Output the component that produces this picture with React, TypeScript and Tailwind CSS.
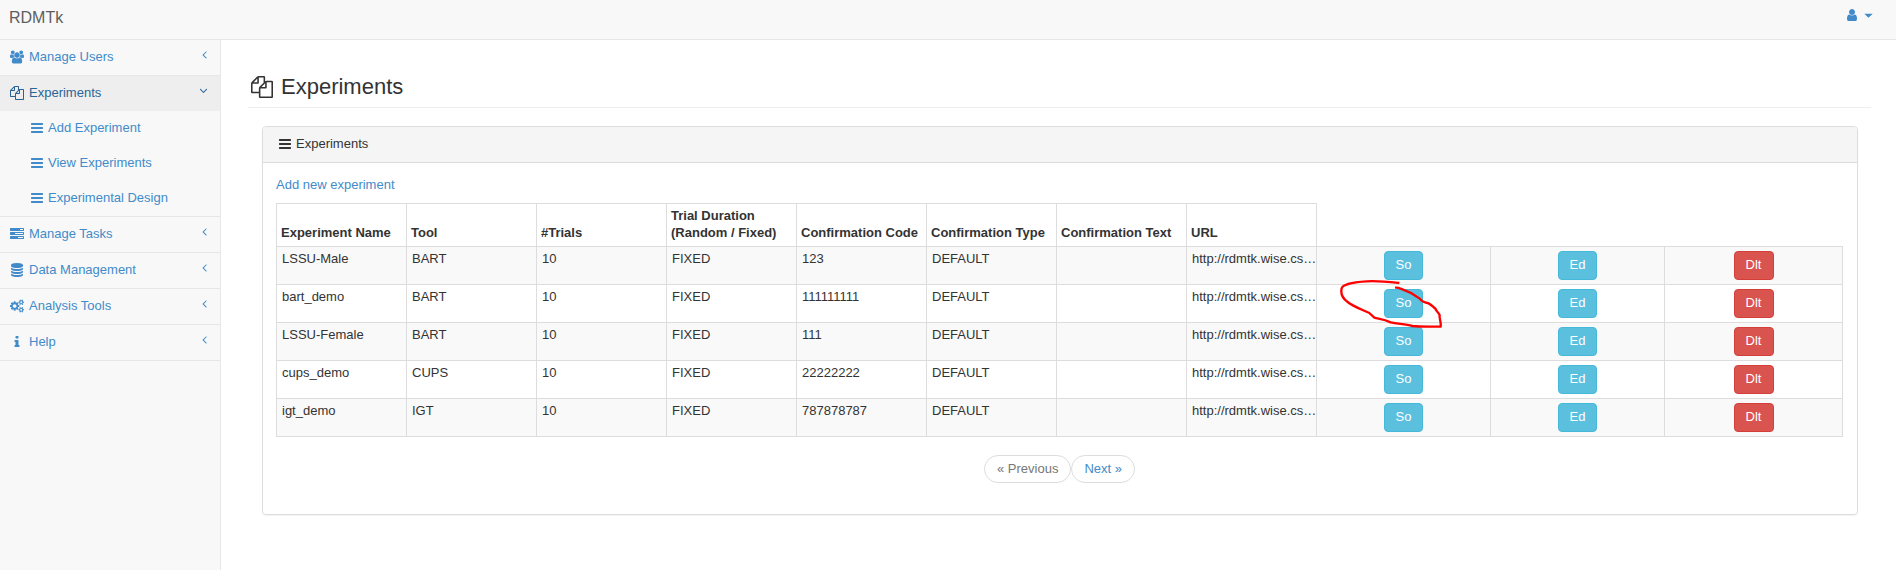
import React from "react";

const icons = {
  files:
    "M1696 384q40 0 68 28t28 68v1216q0 40-28 68t-68 28h-960q-40 0-68-28t-28-68v-288h-544q-40 0-68-28t-28-68v-672q0-40 20-88t48-76l408-408q28-28 76-48t88-20h416q40 0 68 28t28 68v328q68-40 128-40h416zm-544 213l-299 299h299v-299zm-640-384l-299 299h299v-299zm196 647l316-316v-416h-384v416q0 40-28 68t-68 28h-416v640h512v-256q0-40 20-88t48-76zm956 804v-1152h-384v416q0 40-28 68t-68 28h-416v640h896z",
  bars: "M1664 1344v128q0 26-19 45t-45 19h-1408q-26 0-45-19t-19-45v-128q0-26 19-45t45-19h1408q26 0 45 19t19 45zm0-512v128q0 26-19 45t-45 19h-1408q-26 0-45-19t-19-45v-128q0-26 19-45t45-19h1408q26 0 45 19t19 45zm0-512v128q0 26-19 45t-45 19h-1408q-26 0-45-19t-19-45v-128q0-26 19-45t45-19h1408q26 0 45 19t19 45z",
  users:
    "M529 896q-162 5-265 128h-134q-82 0-138-40.5t-56-118.5q0-353 124-353 6 0 43.5 21t97.5 42.5 119 21.5q67 0 133-23-5 37-5 66 0 139 81 256zm1071 637q0 120-73 189.5t-194 69.5h-874q-121 0-194-69.5t-73-189.5q0-53 3.5-103.5t14-109 26.5-108.5 43-97.5 62-81 85.5-53.5 111.5-20q10 0 43 21.5t73 48 107 48 135 21.5 135-21.5 107-48 73-48 43-21.5q61 0 111.5 20t85.5 53.5 62 81 43 97.5 26.5 108.5 14 109 3.5 103.5zm-1024-1277q0 106-75 181t-181 75-181-75-75-181 75-181 181-75 181 75 75 181zm704 384q0 159-112.5 271.5t-271.5 112.5-271.5-112.5-112.5-271.5 112.5-271.5 271.5-112.5 271.5 112.5 112.5 271.5zm576 225q0 78-56 118.5t-138 40.5h-134q-103-123-265-128 81-117 81-256 0-29-5-66 66 23 133 23 59 0 119-21.5t97.5-42.5 43.5-21q124 0 124 353zm-128-609q0 106-75 181t-181 75-181-75-75-181 75-181 181-75 181 75 75 181z",
  tasks:
    "M1024 1408h640v-128h-640v128zm-384-512h1024v-128h-1024v128zm640-512h384v-128h-384v128zm512 832v256q0 26-19 45t-45 19h-1664q-26 0-45-19t-19-45v-256q0-26 19-45t45-19h1664q26 0 45 19t19 45zm0-512v256q0 26-19 45t-45 19h-1664q-26 0-45-19t-19-45v-256q0-26 19-45t45-19h1664q26 0 45 19t19 45zm0-512v256q0 26-19 45t-45 19h-1664q-26 0-45-19t-19-45v-256q0-26 19-45t45-19h1664q26 0 45 19t19 45z",
  database:
    "M896 768q237 0 443-43t325-127v170q0 69-103 128t-280 93.5-385 34.5-385-34.5-280-93.5-103-128v-170q119 84 325 127t443 43zm0 768q237 0 443-43t325-127v170q0 69-103 128t-280 93.5-385 34.5-385-34.5-280-93.5-103-128v-170q119 84 325 127t443 43zm0-384q237 0 443-43t325-127v170q0 69-103 128t-280 93.5-385 34.5-385-34.5-280-93.5-103-128v-170q119 84 325 127t443 43zm0-1152q208 0 385 34.5t280 93.5 103 128v128q0 69-103 128t-280 93.5-385 34.5-385-34.5-280-93.5-103-128v-128q0-69 103-128t280-93.5 385-34.5z",
  cogs: "M832 896q0-106-75-181t-181-75-181 75-75 181 75 181 181 75 181-75 75-181zm768 512q0-52-38-90t-90-38-90 38-38 90q0 53 37.5 90.5t90.5 37.5 90.5-37.5 37.5-90.5zm0-1024q0-52-38-90t-90-38-90 38-38 90q0 53 37.5 90.5t90.5 37.5 90.5-37.5 37.5-90.5zm-384 421v185q0 10-7 19.5t-16 10.5l-155 24q-11 35-32 76 34 48 90 115 7 11 7 20 0 12-7 19-23 30-82.5 89.5t-78.5 59.5q-11 0-21-7l-115-90q-37 19-77 31-11 108-23 155-7 24-30 24h-186q-11 0-20-7.5t-10-17.5l-23-153q-34-10-75-31l-118 89q-7 7-20 7-11 0-21-8-144-133-144-160 0-9 7-19 10-14 41-53t47-61q-23-44-35-82l-152-24q-10-1-17-9.5t-7-19.5v-185q0-10 7-19.5t16-10.5l155-24q11-35 32-76-34-48-90-115-7-11-7-20 0-12 7-20 22-30 82-89t79-59q11 0 21 7l115 90q34-18 77-32 11-108 23-154 7-24 30-24h186q11 0 20 7.5t10 17.5l23 153q34 10 75 31l118-89q8-7 20-7 11 0 21 8 144 133 144 160 0 8-7 19-12 16-42 54t-45 60q23 48 34 82l152 23q10 2 17 10.5t7 19.5zm640 533v140q0 16-149 31-12 27-30 52 51 113 51 138 0 4-4 7-122 71-124 71-8 0-46-47t-52-68q-20 2-30 2t-30-2q-14 21-52 68t-46 47q-2 0-124-71-4-3-4-7 0-25 51-138-18-25-30-52-149-15-149-31v-140q0-16 149-31 13-29 30-52-51-113-51-138 0-4 4-7 4-2 35-20t59-34 30-16q8 0 46 46.5t52 67.5q20-2 30-2t30 2q51-71 92-112l6-2q4 0 124 70 4 3 4 7 0 25-51 138 17 23 30 52 149 15 149 31zm0-1024v140q0 16-149 31-12 27-30 52 51 113 51 138 0 4-4 7-122 71-124 71-8 0-46-47t-52-68q-20 2-30 2t-30-2q-14 21-52 68t-46 47q-2 0-124-71-4-3-4-7 0-25 51-138-18-25-30-52-149-15-149-31v-140q0-16 149-31 13-29 30-52-51-113-51-138 0-4 4-7 4-2 35-20t59-34 30-16q8 0 46 46.5t52 67.5q20-2 30-2t30 2q51-71 92-112l6-2q4 0 124 70 4 3 4 7 0 25-51 138 17 23 30 52 149 15 149 31z",
  info: "M1216 1344v128q0 26-19 45t-45 19h-512q-26 0-45-19t-19-45v-128q0-26 19-45t45-19h64v-384h-64q-26 0-45-19t-19-45v-128q0-26 19-45t45-19h384q26 0 45 19t19 45v576h64q26 0 45 19t19 45zm-128-1152v192q0 26-19 45t-45 19h-256q-26 0-45-19t-19-45v-192q0-26 19-45t45-19h256q26 0 45 19t19 45z",
  user: "M1536 1399q0 109-62.5 187t-150.5 78h-854q-88 0-150.5-78t-62.5-187q0-85 8.5-160.5t31.5-152 58.5-131 94-89 134.5-34.5q131 128 313 128t313-128q76 0 134.5 34.5t94 89 58.5 131 31.5 152 8.5 160.5zm-256-887q0 159-112.5 271.5t-271.5 112.5-271.5-112.5-112.5-271.5 112.5-271.5 271.5-112.5 271.5 112.5 112.5 271.5z",
  angleLeft:
    "M1203 544q0 13-10 23l-393 393 393 393q10 10 10 23t-10 23l-50 50q-10 10-23 10t-23-10l-466-466q-10-10-10-23t10-23l466-466q10-10 23-10t23 10l50 50q10 10 10 23z",
  angleDown:
    "M1395 736q0 13-10 23l-466 466q-10 10-23 10t-23-10l-466-466q-10-10-10-23t10-23l50-50q10-10 23-10t23 10l393 393 393-393q10-10 23-10t23 10l50 50q10 10 10 23z",
  caret: "M320 640h1152l-576 576z",
};

type IconName = keyof typeof icons;

function Icon({ name, className }: { name: IconName; className: string }) {
  const wide = name === "users" || name === "cogs";
  return (
    <svg
      aria-hidden="true"
      viewBox={wide ? "-64 0 1920 1792" : "0 0 1792 1792"}
      className={className}
      fill="currentColor"
    >
      <path d={icons[name]} />
    </svg>
  );
}

function NavItem({ icon, label, open = false }: { icon: IconName; label: string; open?: boolean }) {
  return (
    <a
      href="#"
      className={
        open
          ? "flex items-start bg-[#eeeeee] pt-[7px] pr-[10px] pb-[9px] pl-[9px] text-[#2a6496]"
          : "flex items-start pt-[7px] pr-[9px] pb-[9px] pl-[9px] text-[#428bca]"
      }
    >
      <span className="flex h-[19px] w-4 items-center justify-center">
        <Icon name={icon} className="h-[14px] w-[14px]" />
      </span>
      <span className="ml-1 grow">{label}</span>
      <Icon name={open ? "angleDown" : "angleLeft"} className="mt-px h-[13px] w-[13px]" />
    </a>
  );
}

function SubItem({ label }: { label: string }) {
  return (
    <a href="#" className="flex pt-[7px] pb-[9px] pl-[29px] text-[#428bca]">
      <span className="flex h-[19px] w-4 items-center justify-center">
        <Icon name="bars" className="h-[14px] w-[14px]" />
      </span>
      <span className="ml-[3px]">{label}</span>
    </a>
  );
}

function Scribble() {
  return (
    <svg
      aria-hidden="true"
      viewBox="480 261 315 159"
      className="pointer-events-none absolute -top-3 -left-11 z-10 h-[53px] w-[105px] max-w-none"
      fill="none"
      stroke="#ff0000"
      strokeWidth="7"
      strokeLinejoin="round"
    >
      <path d="M658 279C630 276 595 272 560 274C520 276 488 284 485 295C481 312 489 326 503 336C520 350 545 358 568 369L583 383C600 387 612 387 632 397C655 402 675 402 697 408C730 411 755 409 782 410C784 395 777 385 779 375C773 365 768 362 767 357C758 350 750 340 742 339C730 338 722 330 718 325C700 312 680 302 662 296Q655 292 645 293" />
    </svg>
  );
}

const columns = [
  "Experiment Name",
  "Tool",
  "#Trials",
  "Trial Duration (Random / Fixed)",
  "Confirmation Code",
  "Confirmation Type",
  "Confirmation Text",
  "URL",
];

const url = "http://rdmtk.wise.cs…";

const rows = [
  ["LSSU-Male", "BART", "10", "FIXED", "123", "DEFAULT", "", url],
  ["bart_demo", "BART", "10", "FIXED", "111111111", "DEFAULT", "", url],
  ["LSSU-Female", "BART", "10", "FIXED", "111", "DEFAULT", "", url],
  ["cups_demo", "CUPS", "10", "FIXED", "22222222", "DEFAULT", "", url],
  ["igt_demo", "IGT", "10", "FIXED", "787878787", "DEFAULT", "", url],
];

const infoButton =
  "block h-[29px] w-[39px] rounded-[4px] border border-[#46b8da] bg-[#5bc0de] pb-[3px] text-center text-white";
const dangerButton =
  "block h-[29px] w-10 rounded-[4px] border border-[#d43f3a] bg-[#d9534f] pb-[3px] text-center text-white";

export default function App() {
  return (
    <div className="flex min-h-screen flex-col bg-white font-['Liberation_Sans',Arial,sans-serif] text-[13px] leading-[19px] text-[#333333]">
      <header className="flex items-start justify-between border-b border-[#e7e7e7] bg-[#f8f8f8] pr-[21px] pb-[10px] pl-[9px]">
        <a href="#" className="pt-[7px] text-[16px] leading-[22px] text-[#5e5e5e]">
          RDMTk
        </a>
        <button type="button" aria-label="Account" className="flex items-center gap-[3px] pt-2 text-[#428bca]">
          <Icon name="user" className="h-[14px] w-[14px]" />
          <Icon name="caret" className="h-[13px] w-[13px]" />
        </button>
      </header>

      <div className="flex grow">
        <nav className="w-[221px] shrink-0 border-r border-[#e7e7e7] bg-[#f8f8f8]">
          <ul>
            <li className="border-b border-[#e7e7e7]">
              <NavItem icon="users" label="Manage Users" />
            </li>
            <li className="border-b border-[#e7e7e7]">
              <NavItem icon="files" label="Experiments" open />
              <ul>
                <li><SubItem label="Add Experiment" /></li>
                <li><SubItem label="View Experiments" /></li>
                <li><SubItem label="Experimental Design" /></li>
              </ul>
            </li>
            <li className="border-b border-[#e7e7e7]">
              <NavItem icon="tasks" label="Manage Tasks" />
            </li>
            <li className="border-b border-[#e7e7e7]">
              <NavItem icon="database" label="Data Management" />
            </li>
            <li className="border-b border-[#e7e7e7]">
              <NavItem icon="cogs" label="Analysis Tools" />
            </li>
            <li className="border-b border-[#e7e7e7]">
              <NavItem icon="info" label="Help" />
            </li>
          </ul>
        </nav>

        <main className="min-w-0 grow pt-[34px] pr-[25px] pl-[27px]">
          <h1 className="flex items-center gap-2 border-b border-[#eeeeee] pb-[7px] pl-[3px] text-[22px] leading-[26px]">
            <Icon name="files" className="h-[22px] w-[22px]" />
            Experiments
          </h1>

          <section className="mt-[18px] mr-[13px] ml-[14px] rounded-[4px] border border-[#dddddd] shadow-[0_1px_1px_rgba(0,0,0,0.05)]">
            <h2 className="flex rounded-t-[3px] border-b border-[#dddddd] bg-[#f5f5f5] pt-[7px] pb-[9px] pl-[14px]">
              <span className="flex h-[19px] w-4 items-center justify-center">
                <Icon name="bars" className="h-[14px] w-[14px]" />
              </span>
              <span className="ml-[3px]">Experiments</span>
            </h2>
            <div className="pt-3 pr-[14px] pb-[31px] pl-[13px]">
              <a href="#" className="text-[#428bca]">
                Add new experiment
              </a>
              <table className="mt-[9px] w-full table-fixed border-collapse text-left leading-[17px]">
                <colgroup>
                  {columns.map((c) => (
                    <col key={c} className="w-[130px]" />
                  ))}
                  <col className="w-[174px]" />
                  <col className="w-[174px]" />
                  <col />
                </colgroup>
                <thead>
                  <tr>
                    {columns.map((c) => (
                      <th key={c} className="border border-[#dddddd] px-1 pt-[3px] pb-[5px] align-bottom font-bold">
                        {c}
                      </th>
                    ))}
                  </tr>
                </thead>
                <tbody>
                  {rows.map((row, i) => (
                    <tr key={row[0]} className="odd:bg-[#f9f9f9]">
                      {row.map((cell, j) => (
                        <td
                          key={j}
                          className="border border-[#dddddd] pt-[3px] pl-[5px] align-top whitespace-nowrap"
                        >
                          {cell}
                        </td>
                      ))}
                      <td className="border border-[#dddddd] p-1">
                        <div className="relative mx-auto w-[39px]">
                          <button type="button" className={infoButton}>So</button>
                          {i === 1 && <Scribble />}
                        </div>
                      </td>
                      <td className="border border-[#dddddd] p-1">
                        <div className="mx-auto w-[39px]">
                          <button type="button" className={infoButton}>Ed</button>
                        </div>
                      </td>
                      <td className="border border-[#dddddd] p-1">
                        <div className="mx-auto w-10">
                          <button type="button" className={dangerButton}>Dlt</button>
                        </div>
                      </td>
                    </tr>
                  ))}
                </tbody>
              </table>
              <div className="mt-[18px] flex justify-center leading-[18px]">
                <a
                  href="#"
                  aria-disabled="true"
                  className="rounded-full border border-[#dddddd] px-3 py-1 text-[#777777]"
                >
                  « Previous
                </a>
                <a
                  href="#"
                  className="rounded-full border border-[#dddddd] px-3 py-1 text-[#428bca]"
                >
                  Next »
                </a>
              </div>
            </div>
          </section>
        </main>
      </div>
    </div>
  );
}
